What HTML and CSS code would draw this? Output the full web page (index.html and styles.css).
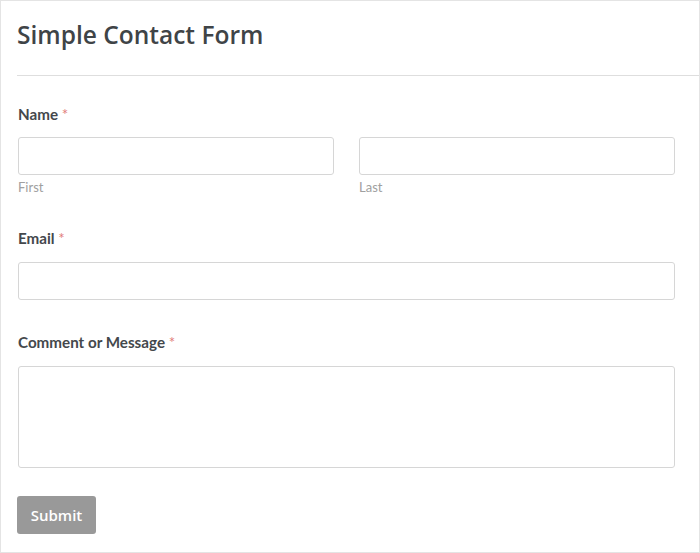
FILE: index.html
```html
<!DOCTYPE html>
<html lang="en">
<head>
<meta charset="utf-8">
<title>Simple Contact Form</title>
<link rel="stylesheet" href="styles.css">
</head>
<body>
<div class="card">
  <div class="card-header">
    <h1 class="title">Simple Contact Form</h1>
  </div>
  <form class="form">
    <div class="field field-name">
      <label class="label">Name <span class="req">*</span></label>
      <div class="row">
        <div class="col">
          <input class="input" type="text">
          <div class="sublabel">First</div>
        </div>
        <div class="col">
          <input class="input" type="text">
          <div class="sublabel">Last</div>
        </div>
      </div>
    </div>
    <div class="field field-email">
      <label class="label">Email <span class="req">*</span></label>
      <input class="input" type="email">
    </div>
    <div class="field field-message">
      <label class="label">Comment or Message <span class="req">*</span></label>
      <textarea class="textarea"></textarea>
    </div>
    <button class="submit" type="button">Submit</button>
  </form>
</div>
</body>
</html>
```

FILE: styles.css
```css
html, body {
  margin: 0;
  padding: 0;
  background: #ffffff;
}

.card {
  width: 700px;
  height: 553px;
  box-sizing: border-box;
  border: 1px solid #e4e4e4;
  background: #ffffff;
  display: flex;
  flex-direction: column;
}

.card-header {
  margin-left: 16px;
  padding: 18px 0 24px 0;
  border-bottom: 1px solid #dedede;
}

.title {
  margin: 0;
  font-family: "Open Sans", "Noto Sans", sans-serif;
  font-size: 24.5px;
  line-height: 32px;
  font-weight: 600;
  color: #3f4447;
}

.form {
  display: flex;
  flex-direction: column;
  align-items: flex-start;
  padding: 29px 24px 0 17px;
}

.field {
  display: flex;
  flex-direction: column;
  align-self: stretch;
}

.field-name {
  margin-bottom: 34px;
}

.field-email {
  margin-bottom: 33px;
}

.field-message {
  margin-bottom: 28px;
}

.label {
  font-family: Lato, "Open Sans", sans-serif;
  font-weight: 700;
  font-size: 15.2px;
  line-height: 18px;
  color: #44484c;
  margin-bottom: 14px;
}

.field-email .label,
.field-message .label {
  margin-bottom: 15px;
}

.req {
  color: #e27c79;
  font-weight: 400;
}

.row {
  display: flex;
  gap: 25px;
}

.col {
  flex: 1;
  display: flex;
  flex-direction: column;
}

.input,
.textarea {
  box-sizing: border-box;
  width: 100%;
  height: 38px;
  margin: 0;
  padding: 6px 10px;
  border: 1px solid #d6d6d6;
  border-radius: 3px;
  background: #ffffff;
  font-family: Lato, sans-serif;
  font-size: 15px;
  outline: none;
}

.textarea {
  height: 102px;
  resize: none;
  display: block;
}

.sublabel {
  margin-top: 4px;
  font-family: Lato, "Open Sans", sans-serif;
  font-size: 13px;
  line-height: 16px;
  color: #a0a0a0;
}

.submit {
  width: 79px;
  height: 38px;
  padding: 0;
  margin: 0 0 0 -1px;
  border: none;
  border-radius: 3px;
  background: #999999;
  color: #ffffff;
  font-family: "Open Sans", "Noto Sans", sans-serif;
  font-weight: 600;
  font-size: 15px;
}
```
